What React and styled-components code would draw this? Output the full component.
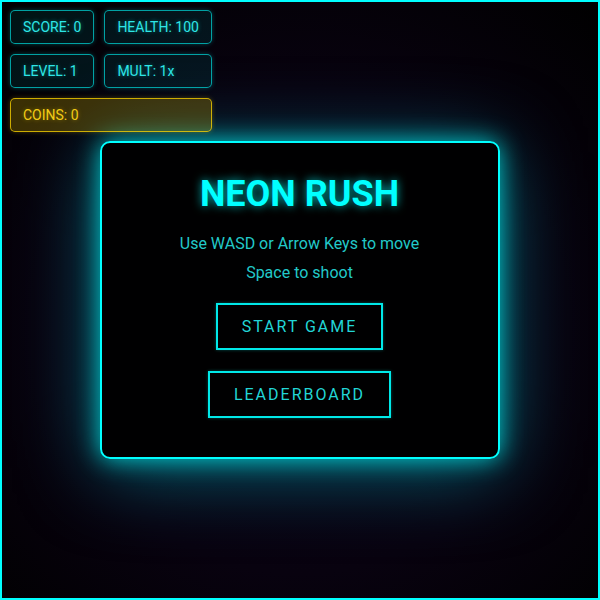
import React from 'react';
import styled, { createGlobalStyle } from 'styled-components';

const GlobalStyle = createGlobalStyle`
  html, body {
    margin: 0;
    padding: 0;
    background: #000;
  }
  * {
    box-sizing: border-box;
  }
`;

const GameArea = styled.div`
  position: relative;
  width: 600px;
  height: 600px;
  border: 2px solid #00ffff;
  background: radial-gradient(circle at 50% 55%, #0b0418 0%, #08020f 55%, #000 100%);
  font-family: Roboto, "Liberation Sans", sans-serif;
  display: flex;
  align-items: center;
  justify-content: center;
  overflow: hidden;
`;

const Hud = styled.div`
  position: absolute;
  top: 8px;
  left: 8px;
  display: grid;
  grid-template-columns: auto auto;
  gap: 10px;
  z-index: 2;
`;

const Stat = styled.div`
  padding: 8px 12px;
  font-size: 14px;
  line-height: 16px;
  border-radius: 5px;
  color: ${p => (p.gold ? '#f2cc16' : '#2ee6e6')};
  background: ${p => (p.gold ? 'rgba(255, 215, 0, 0.22)' : 'rgba(0, 255, 255, 0.08)')};
  border: 1px solid ${p => (p.gold ? 'rgba(255, 215, 0, 0.75)' : 'rgba(0, 255, 255, 0.6)')};
  box-shadow: 0 0 5px ${p => (p.gold ? 'rgba(255, 215, 0, 0.25)' : 'rgba(0, 255, 255, 0.25)')};
  text-shadow: 0 0 4px ${p => (p.gold ? 'rgba(255, 215, 0, 0.4)' : 'rgba(0, 255, 255, 0.4)')};
  grid-column: ${p => (p.wide ? 'span 2' : 'auto')};
`;

const Menu = styled.div`
  width: 400px;
  height: 318px;
  margin: -1px 0 0 -1px;
  padding: 30px 40px 40px;
  background: rgba(0, 0, 0, 0.92);
  border: 2px solid #00ffff;
  border-radius: 10px;
  box-shadow: 0 0 25px rgba(0, 255, 255, 0.75), 0 10px 80px rgba(0, 210, 230, 0.5);
  display: flex;
  flex-direction: column;
  align-items: center;
  z-index: 1;
`;

const Title = styled.h1`
  margin: 0 0 19px;
  font-size: 36px;
  line-height: 42px;
  font-weight: 700;
  color: #00ffff;
  text-shadow: 0 0 10px rgba(0, 255, 255, 0.7);
`;

const Hint = styled.p`
  margin: 0 0 10px;
  font-size: 16px;
  line-height: 19px;
  color: #22c9c9;
`;

const MenuButton = styled.button`
  margin-top: ${p => (p.first ? '11px' : '21px')};
  padding: 12px 24px;
  background: transparent;
  border: 2px solid #00e8e8;
  color: #22d6d6;
  font-family: Roboto, "Liberation Sans", sans-serif;
  font-size: 16px;
  line-height: 19px;
  letter-spacing: 2px;
  cursor: pointer;
  box-shadow: 0 0 3px rgba(0, 255, 255, 0.3);
`;

const App = () => {
  return (
    <>
      <GlobalStyle />
      <GameArea>
        <Hud>
          <Stat>SCORE: 0</Stat>
          <Stat>HEALTH: 100</Stat>
          <Stat>LEVEL: 1</Stat>
          <Stat>MULT: 1x</Stat>
          <Stat gold wide>COINS: 0</Stat>
        </Hud>
        <Menu>
          <Title>NEON RUSH</Title>
          <Hint>Use WASD or Arrow Keys to move</Hint>
          <Hint>Space to shoot</Hint>
          <MenuButton first>START GAME</MenuButton>
          <MenuButton>LEADERBOARD</MenuButton>
        </Menu>
      </GameArea>
    </>
  );
};

export default App;
